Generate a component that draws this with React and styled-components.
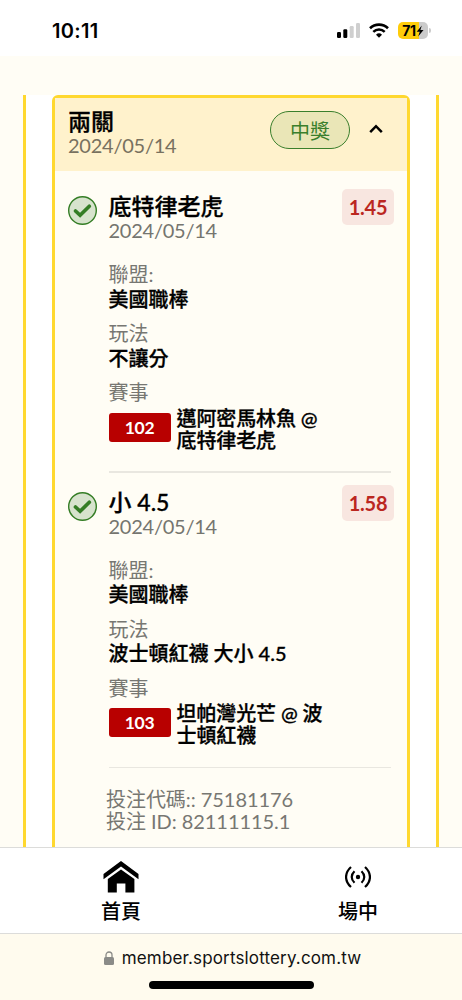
import React from 'react'
import styled, { createGlobalStyle } from 'styled-components'

const GlobalStyle = createGlobalStyle`
	* {
		box-sizing: border-box;
	}

	body {
		margin: 0;
		background: #fffdf5;
		font-family: Lato, 'Noto Sans CJK TC', sans-serif;
		color: #000;
	}
`

const Screen = styled.div`
	display: flex;
	flex-direction: column;
	width: 462px;
	height: 1000px;
	overflow: hidden;
	background: #fffdf5;
`

const StatusBar = styled.header`
	display: flex;
	flex: none;
	align-items: center;
	justify-content: space-between;
	height: 56px;
	padding: 5px 31px 0 52px;
	background: #fff;
`

const Clock = styled.span`
	font-family: Inter, sans-serif;
	font-size: 20px;
	font-weight: 600;
	letter-spacing: 0.3px;
	line-height: 24px;
`

const StatusIcons = styled.div`
	display: flex;
	align-items: center;
	gap: 9px;
`

const Battery = styled.div`
	display: flex;
	align-items: center;
	gap: 1px;
`

const BatteryBody = styled.div`
	display: flex;
	align-items: center;
	justify-content: center;
	width: 30px;
	height: 17px;
	border-radius: 5px;
	background: linear-gradient(to right, #ffcc0a 71%, #cbcbcb 71%);
	font-family: Inter, sans-serif;
	font-size: 14px;
	font-weight: 700;
	letter-spacing: -0.3px;
	line-height: 17px;
`

const BatteryCap = styled.div`
	width: 2px;
	height: 5px;
	border-radius: 0 2px 2px 0;
	background: #cbcbcb;
`

const Content = styled.main`
	display: flex;
	flex: none;
	height: 791px;
	padding: 39px 23px 0;
	overflow: hidden;
`

const Frame = styled.section`
	flex: 1;
	padding: 0 26px;
	border: solid #ffd82f;
	border-width: 0 3px;
	background: #fff;
`

const Card = styled.article`
	height: 800px;
	border: 3px solid #ffd82f;
	border-radius: 6px;
	background: #fffdf5;
`

const CardHeader = styled.div`
	display: flex;
	align-items: flex-start;
	height: 73px;
	padding: 11px 24px 0 13px;
	background: #fff2cc;
`

const HeaderText = styled.div`
	flex: 1;
`

const Title = styled.h2`
	margin: 0;
	font-size: 23px;
	font-weight: 500;
	line-height: 24px;
	-webkit-text-stroke: 0.3px #000;
`

const DateText = styled.div`
	color: ${({ $warm }) => ($warm ? '#78715f' : '#75756f')};
	font-size: 20px;
	letter-spacing: -0.25px;
	line-height: 24px;
`

const WonBadge = styled.span`
	width: 80px;
	height: 38px;
	margin: 2px 19px 0 0;
	border: 1.5px solid #3a7f2c;
	border-radius: 19px;
	background: #eae6b7;
	color: #3a7f2c;
	font-size: 20px;
	line-height: 38px;
	text-align: center;
`

const Toggle = styled.button`
	display: flex;
	margin: 15px 0 0;
	padding: 0;
	border: 0;
	background: none;
`

const Bet = styled.div`
	display: grid;
	grid-template-columns: 29px 1fr 52px;
	column-gap: 11px;
	height: 295.5px;
	margin: 0 13px;
	padding-top: 24px;
`

const CheckIcon = styled.svg`
	margin-top: 0;
`

const BetBody = styled.div`
	margin-top: -1px;
	padding-left: 0.5px;
	white-space: nowrap;
`

const Odds = styled.div`
	height: 36px;
	margin-top: -6px;
	border-radius: 5px;
	background: #f8e6e0;
	color: #bb271f;
	font-size: 20px;
	font-weight: 700;
	letter-spacing: -0.2px;
	line-height: 37px;
	text-align: center;
`

const Field = styled.div`
	margin-top: ${({ $first }) => ($first ? '20px' : '10px')};
	line-height: 24.6px;
	font-size: 20px;
`

const Label = styled.div`
	color: #777772;
`

const Value = styled.div`
	font-weight: 500;
	-webkit-text-stroke: 0.3px #000;
`

const Match = styled.div`
	display: flex;
	align-items: flex-start;
	gap: 6px;
	margin-top: 2px;
`

const MatchCode = styled.span`
	width: 62px;
	height: 29px;
	margin-top: 6px;
	border-radius: 3px;
	background: #b80000;
	color: #fff;
	font-size: 17.5px;
	font-weight: 700;
	letter-spacing: -0.3px;
	line-height: 29px;
	text-align: center;
`

const Teams = styled.span`
	width: 150px;
	font-size: 20px;
	font-weight: 500;
	letter-spacing: -0.1px;
	line-height: 22px;
	white-space: pre-line;
	-webkit-text-stroke: 0.3px #000;
`

const Divider = styled.div`
	height: 1.5px;
	margin-top: 20.5px;
	margin-right: -60px;
	background: #e9e7e0;
`

const BetInfo = styled.div`
	margin: 26px 0 0 51px;
	color: #777772;
	font-size: 20px;
	letter-spacing: -0.05px;
	line-height: 22px;
`

const TabBar = styled.nav`
	display: flex;
	flex: none;
	justify-content: space-between;
	height: 87px;
	padding: 11px 84px 0 101px;
	border: solid #dcdcda;
	border-width: 1px 0;
	background: #fff;
`

const Tab = styled.a`
	display: flex;
	flex-direction: column;
	align-items: center;
	gap: 4px;
	font-size: 20px;
	font-weight: 500;
	line-height: 24px;
`

const TabIcon = styled.span`
	display: flex;
	align-items: center;
	height: 36px;
`

const BrowserBar = styled.footer`
	display: flex;
	flex: 1;
	flex-direction: column;
	align-items: center;
	background: #fffbee;
`

const Address = styled.div`
	display: flex;
	align-items: center;
	gap: 8px;
	margin: 12px 0 0 3px;
	font-family: Inter, sans-serif;
	font-size: 17px;
	letter-spacing: 0.15px;
	line-height: 24px;
	color: #111;
`

const HomeIndicator = styled.div`
	width: 165px;
	height: 8px;
	margin-top: 11px;
	border-radius: 4px;
	background: #000;
`

const bets = [
	{
		name: '底特律老虎',
		date: '2024/05/14',
		odds: '1.45',
		league: '美國職棒',
		play: '不讓分',
		code: '102',
		teams: '邁阿密馬林魚 @\n底特律老虎',
	},
	{
		name: '小 4.5',
		date: '2024/05/14',
		odds: '1.58',
		league: '美國職棒',
		play: '波士頓紅襪 大小 4.5',
		code: '103',
		teams: '坦帕灣光芒 @ 波\n士頓紅襪',
	},
]

function SignalIcon() {
	return (
		<svg width='23' height='15' viewBox='0 0 23 15'>
			<rect x='0' y='9' width='4' height='6' rx='1.2' />
			<rect x='6.3' y='6.2' width='4' height='8.8' rx='1.2' />
			<rect x='12.7' y='3' width='4' height='12' rx='1.2' fill='#cfcfcf' />
			<rect x='19' y='0' width='4' height='15' rx='1.2' fill='#cfcfcf' />
		</svg>
	)
}

function WifiIcon() {
	return (
		<svg width='20' height='15' viewBox='0 0 20 15' fill='none' stroke='#000'>
			<path d='M1 5.2a13 13 0 0 1 18 0' strokeWidth='2.6' />
			<path d='M4.3 8.8a8.2 8.2 0 0 1 11.4 0' strokeWidth='2.5' />
			<path d='M10 14.7 7 11.7a4.3 4.3 0 0 1 6 0z' fill='#000' stroke='none' />
		</svg>
	)
}

function BetItem({ bet }) {
	return (
		<Bet>
			<CheckIcon width='30' height='30' viewBox='0 0 30 30'>
				<circle cx='14.5' cy='15.5' r='13.8' fill='#d7e3cd' stroke='#347d25' strokeWidth='1.4' />
				<path
					d='m7.5 16 4.6 4.3 9.2-9'
					fill='none'
					stroke='#347d25'
					strokeWidth='3.7'
					strokeLinecap='round'
				/>
			</CheckIcon>
			<BetBody>
				<Title>{bet.name}</Title>
				<DateText>{bet.date}</DateText>
				<Field $first>
					<Label>聯盟:</Label>
					<Value>{bet.league}</Value>
				</Field>
				<Field>
					<Label>玩法</Label>
					<Value>{bet.play}</Value>
				</Field>
				<Field>
					<Label>賽事</Label>
					<Match>
						<MatchCode>{bet.code}</MatchCode>
						<Teams>{bet.teams}</Teams>
					</Match>
				</Field>
				<Divider />
			</BetBody>
			<Odds>{bet.odds}</Odds>
		</Bet>
	)
}

export default function App() {
	return (
		<Screen>
			<GlobalStyle />

			{/* Status bar */}
			<StatusBar>
				<Clock>10:11</Clock>
				<StatusIcons>
					<SignalIcon />
					<WifiIcon />
					<Battery>
						<BatteryBody>
							71
							<svg width='8' height='12' viewBox='0 0 8 12'>
								<path d='M5.8.5.7 6.8h3L2.2 11.5 7.5 5.1H4.4z' />
							</svg>
						</BatteryBody>
						<BatteryCap />
					</Battery>
				</StatusIcons>
			</StatusBar>

			{/* Bet slip */}
			<Content>
				<Frame>
					<Card>
						<CardHeader>
							<HeaderText>
								<Title>兩關</Title>
								<DateText $warm>2024/05/14</DateText>
							</HeaderText>
							<WonBadge>中獎</WonBadge>
							<Toggle aria-label='收合'>
								<svg width='14' height='10' viewBox='0 0 14 10'>
									<path
										d='m1.2 8.2 5.8-6 5.8 6'
										fill='none'
										stroke='#000'
										strokeWidth='2.5'
									/>
								</svg>
							</Toggle>
						</CardHeader>
						{bets.map((bet) => (
							<BetItem key={bet.code} bet={bet} />
						))}
						<BetInfo>
							<div>投注代碼:: 75181176</div>
							<div>投注 ID: 82111115.1</div>
						</BetInfo>
					</Card>
				</Frame>
			</Content>

			{/* Tabs */}
			<TabBar>
				<Tab>
					<TabIcon>
						<svg width='36' height='32' viewBox='0 0 36 32'>
							<path d='M18 0 .5 13v5.3L18 5.5l17.5 12.8V13z' />
							<path d='M18 8.5 4.8 18v13.5h9v-9h8.6v9h9V18z' />
						</svg>
					</TabIcon>
					首頁
				</Tab>
				<Tab>
					<TabIcon>
						<svg
							width='26'
							height='22'
							viewBox='0 0 26 22'
							fill='none'
							stroke='#000'
							strokeWidth='2.2'>
							<path d='M6 1C-.6 7-.6 15 6 21M20 1c6.6 6 6.6 14 0 20' />
							<path d='M9.5 5.2c-3.7 3.5-3.7 8.1 0 11.6M16.5 5.2c3.7 3.5 3.7 8.1 0 11.6' />
							<circle cx='13' cy='11' r='2.2' fill='#000' stroke='none' />
						</svg>
					</TabIcon>
					場中
				</Tab>
			</TabBar>

			{/* Browser address */}
			<BrowserBar>
				<Address>
					<svg width='10' height='14' viewBox='0 0 10 14'>
						<rect x='0' y='6' width='10' height='8' rx='1.5' fill='#8b8b88' />
						<path
							d='M2 6.5V4a3 3 0 0 1 6 0v2.5'
							fill='none'
							stroke='#8b8b88'
							strokeWidth='1.3'
						/>
					</svg>
					member.sportslottery.com.tw
				</Address>
				<HomeIndicator />
			</BrowserBar>
		</Screen>
	)
}
